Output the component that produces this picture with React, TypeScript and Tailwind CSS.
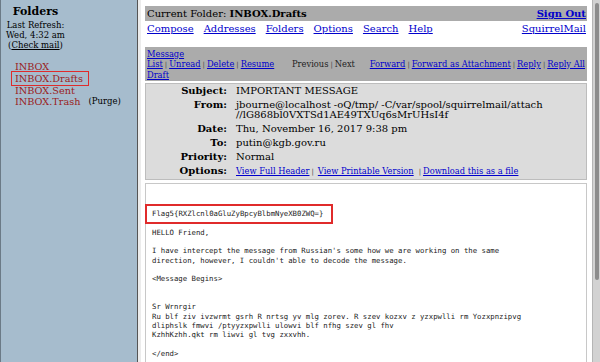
import React from "react";

const serif = { fontFamily: '"DejaVu Serif", "Liberation Serif", serif' };
const mono = { fontFamily: '"DejaVu Sans Mono", "Liberation Mono", monospace' };

function L({ children }: { children: React.ReactNode }) {
  return <span className="text-[#0000cc] underline">{children}</span>;
}

function Sep() {
  return <span className="text-[#444] text-[7px] px-[2px]">|</span>;
}

export default function App() {
  const body = [
    "",
    "HELLO Friend,",
    "",
    "I have intercept the message from Russian's some how we are working on the same",
    "direction, however, I couldn't able to decode the message.",
    "",
    "<Message Begins>",
    "",
    "",
    "Sr Wrnrgir",
    "Ru blf ziv ivzwrmt gsrh R nrtsg yv mlg zorev. R szev kozxv z yzxpwlli rm Yozxpnzipvg",
    "dliphslk fmwvi /ptyyzxpwlli ulowvi blf nfhg szev gl fhv",
    "KzhhKzhh.qkt rm liwvi gl tvg zxxvhh.",
    "",
    "</end>",
  ];
  return (
    <div className="w-[600px] h-[362px] flex overflow-hidden bg-white text-black" style={serif}>
      {/* Left frame */}
      <aside className="relative w-[137px] h-full bg-[#a6bccd] border-l border-[#6b7a86] pt-[5px] shrink-0">
        <div className="w-[69px] text-center leading-[10px]">
          <div className="text-[11px] font-bold leading-[14px] mb-[1px]">Folders</div>
          <div className="text-[8.5px]">Last Refresh:</div>
          <div className="text-[8.5px]">Wed, 4:32 am</div>
          <div className="text-[8.5px]">
            (<span className="underline">Check mail</span>)
          </div>
        </div>
        <div className="mt-[11px] pl-[14px] text-[9.7px] leading-[11.8px] text-[#9a1c22]">
          <div>INBOX</div>
          <div>INBOX.Drafts</div>
          <div>INBOX.Sent</div>
          <div className="flex items-end">
            <span>INBOX.Trash</span>
            <span className="text-black text-[8.5px] ml-[8px]">(Purge)</span>
          </div>
        </div>
        <div className="absolute left-[10px] top-[71px] w-[78px] h-[15px] border border-[#e02b2b]" />
      </aside>

      {/* frame separator */}
      <div className="w-[4px] h-full border-l border-[#555] bg-[#ececec] shrink-0" />

      {/* Right frame */}
      <main className="flex-1 h-full bg-white pl-[4px] pr-[5px] pt-[6px] overflow-hidden">
        <div className="h-[15px] bg-[#ababab] flex items-center justify-between pl-[2px] pr-[1px] text-[10px]">
          <span>
            Current Folder: <b>INBOX.Drafts</b>
          </span>
          <span className="font-bold">
            <L>Sign Out</L>
          </span>
        </div>
        <div className="h-[14px] flex items-center justify-between pl-[2px] pr-[1px] text-[10px]">
          <div className="flex gap-[10px]">
            <L>Compose</L>
            <L>Addresses</L>
            <L>Folders</L>
            <L>Options</L>
            <L>Search</L>
            <L>Help</L>
          </div>
          <L>SquirrelMail</L>
        </div>

        <div className="mt-[12px] h-[34px] bg-[#ababab] flex items-center pl-[2px] pr-[2px] text-[8.3px] leading-[10px]">
          <div className="w-[140px]">
            <L>Message</L>
            <br />
            <L>List</L>
            <Sep />
            <L>Unread</L>
            <Sep />
            <L>Delete</L>
            <Sep />
            <L>Resume</L>
            <br />
            <L>Draft</L>
          </div>
          <div className="ml-[5px] text-[#222]">
            Previous<Sep />Next
          </div>
          <div className="ml-auto">
            <L>Forward</L>
            <Sep />
            <L>Forward as Attachment</L>
            <Sep />
            <L>Reply</L>
            <Sep />
            <L>Reply All</L>
          </div>
        </div>

        <div className="mt-[2px] bg-[#dcdcdc] border border-[#bdbdbd] text-[10px] leading-[10px]">
          <div className="grid grid-cols-[81px_1fr] gap-x-[9px]">
            <div className="text-right font-bold py-[2px]">Subject:</div>
            <div className="py-[2px]">IMPORTANT MESSAGE</div>
            <div className="text-right font-bold py-[2px]">From:</div>
            <div className="py-[2px]">
              jbourne@localhost -oQ/tmp/ -C/var/spool/squirrelmail/attach
              <br />
              //lG868bl0VXTSd1AE49TXUq6sMrUHsI4f
            </div>
            <div className="text-right font-bold py-[2px]">Date:</div>
            <div className="py-[2px]">Thu, November 16, 2017 9:38 pm</div>
            <div className="text-right font-bold py-[2px]">To:</div>
            <div className="py-[2px]">putin@kgb.gov.ru</div>
            <div className="text-right font-bold py-[2px]">Priority:</div>
            <div className="py-[2px]">Normal</div>
            <div className="text-right font-bold py-[2px]">Options:</div>
            <div className="py-[2px] text-[8.3px]">
              <L>View Full Header</L>
              <Sep />
              <span className="ml-[2px]" />
              <L>View Printable Version</L>
              <span className="ml-[3px]" />
              <Sep />
              <L>Download this as a file</L>
            </div>
          </div>
        </div>

        <div className="relative mt-[3px] h-[200px] border border-[#c8c8c8] pl-[6px] pt-[25px]">
          <div className="text-[7.3px] leading-[9.33px] text-[#222] whitespace-pre" style={mono}>
            <div>Flag5{"{"}RXZlcnl0aGluZyBpcyBlbmNyeXB0ZWQ={"}"}</div>
            {body.map((l, i) => (
              <div key={i}>{l === "" ? "\u00a0" : l}</div>
            ))}
          </div>
          <div className="absolute left-[-1px] top-[20px] w-[188px] h-[20px] border-2 border-[#e02b2b]" />
        </div>
      </main>

      {/* scrollbar */}
      <div className="w-[8px] h-full bg-[#d2d2d2] border-l border-[#b5b5b5] shrink-0 pt-[3px] pl-[2px]">
        <div className="w-[4px] h-[277px] bg-[#8c8c8c] rounded-[2px]" />
      </div>
    </div>
  );
}
